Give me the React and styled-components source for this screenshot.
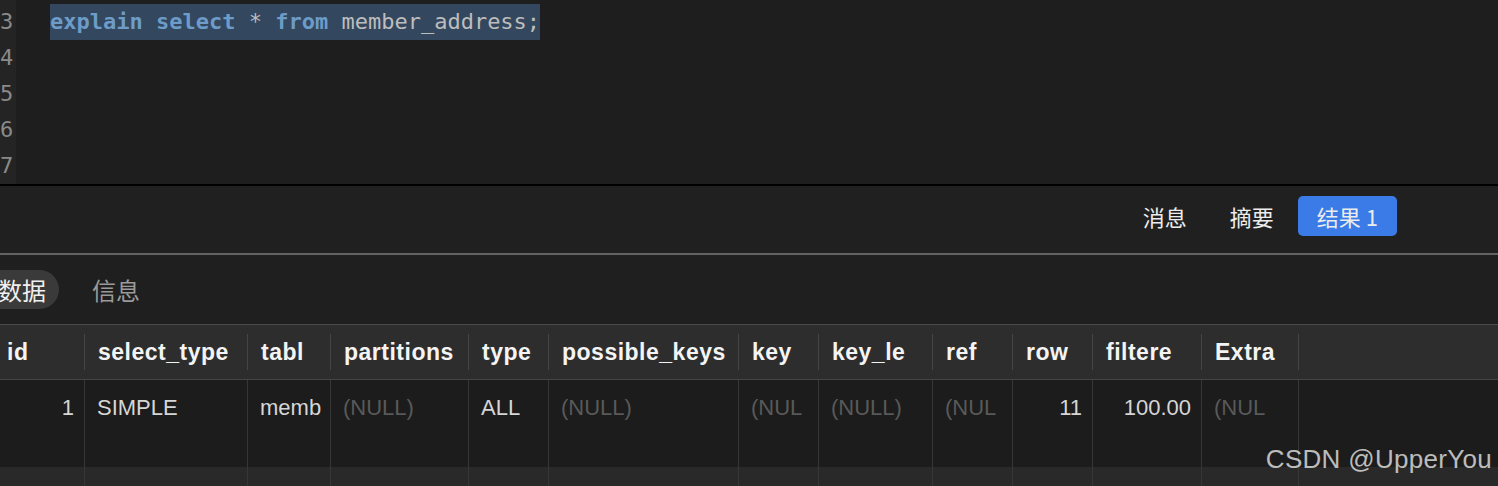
import styled, { createGlobalStyle } from "styled-components";

const GlobalStyle = createGlobalStyle`
  html, body {
    margin: 0;
    padding: 0;
    background: #1e1e1e;
  }
  #root {
    width: 1498px;
    height: 486px;
    overflow: hidden;
  }
`;

const Page = styled.div`
  position: relative;
  width: 1498px;
  height: 486px;
  overflow: hidden;
  display: flex;
  flex-direction: column;
  font-family: "Liberation Sans", "Noto Sans CJK SC", sans-serif;
`;

const Editor = styled.div`
  display: flex;
  height: 184px;
  background: #1e1e1e;
  border-bottom: 2px solid #000;
  flex-shrink: 0;
`;

const Gutter = styled.div`
  width: 16px;
  padding-top: 4px;
  background: #242424;
  overflow: hidden;
  flex-shrink: 0;
`;

const LineNo = styled.div`
  height: 36px;
  line-height: 36px;
  padding-right: 6px;
  text-align: right;
  font-family: "DejaVu Sans Mono", monospace;
  font-size: 22px;
  color: #8a8a8a;
  white-space: nowrap;
`;

const Code = styled.div`
  padding: 4px 0 0 34px;
`;

const CodeLine = styled.div`
  height: 36px;
  line-height: 36px;
  font-family: "DejaVu Sans Mono", monospace;
  font-size: 22px;
  color: #bdbdbd;
  white-space: pre;
`;

const Selected = styled.span`
  display: inline-block;
  background: #33475f;
`;

const Kw = styled.span`
  color: #6d9cc8;
  font-weight: bold;
`;

const TabBar = styled.div`
  display: flex;
  justify-content: flex-end;
  align-items: flex-start;
  gap: 5px;
  height: 69px;
  padding: 10px 101px 0 0;
  box-sizing: border-box;
  background: #202020;
  border-bottom: 2px solid #626262;
  flex-shrink: 0;
`;

const Tab = styled.div`
  height: 40px;
  line-height: 40px;
  padding: 0 19px;
  border-radius: 5px;
  font-family: "Noto Sans CJK SC", sans-serif;
  font-size: 22px;
  color: #ececec;
  background: ${(p) => (p.$active ? "#3a7be8" : "transparent")};
`;

const SubBar = styled.div`
  display: flex;
  align-items: center;
  gap: 15px;
  height: 69px;
  background: #1f1f1f;
  border-bottom: 1px solid #4a4a4a;
  flex-shrink: 0;
`;

const Pill = styled.div`
  height: 39px;
  line-height: 39px;
  padding: 0 13px 0 18px;
  border-radius: 0 20px 20px 0;
  font-family: "Noto Sans CJK SC", sans-serif;
  font-size: 24px;
  color: ${(p) => (p.$active ? "#f0f0f0" : "#9a9a9a")};
  background: ${(p) => (p.$active ? "#3a3a3a" : "transparent")};
  margin-left: ${(p) => (p.$first ? "-20px" : "0")};
`;

const Table = styled.div`
  display: flex;
  flex-direction: column;
  flex: 1;
  background: #1c1c1c;
`;

const Row = styled.div`
  display: grid;
  grid-template-columns: ${(p) => p.$cols} 1fr;
  height: ${(p) => p.$h}px;
  background: ${(p) => p.$bg};
  border-bottom: ${(p) => (p.$head ? "1px solid #444" : "none")};
  flex-shrink: 0;
`;

const HeadCell = styled.div`
  position: relative;
  display: flex;
  align-items: center;
  padding-left: ${(p) => (p.$first ? 7 : 13)}px;
  font-size: 23px;
  font-weight: bold;
  letter-spacing: 0.5px;
  color: #f4f4f4;
  white-space: nowrap;
  overflow: hidden;
  &::after {
    content: "";
    position: absolute;
    right: 0;
    top: 9px;
    bottom: 9px;
    width: 1px;
    background: ${(p) => (p.$filler ? "transparent" : "#454545")};
  }
`;

const Cell = styled.div`
  padding: 15px 10px 0 ${(p) => (p.$right ? 0 : 12)}px;
  font-size: 22px;
  line-height: 25px;
  text-align: ${(p) => (p.$right ? "right" : "left")};
  color: ${(p) => (p.$null ? "#595959" : "#d6d6d6")};
  border-right: ${(p) => (p.$filler ? "none" : "1px solid #363636")};
  white-space: nowrap;
  overflow: hidden;
`;

const Watermark = styled.div`
  position: absolute;
  right: 6px;
  top: 444px;
  font-size: 26px;
  line-height: 30px;
  letter-spacing: 0.3px;
  color: rgba(225, 225, 225, 0.82);
  white-space: nowrap;
`;

const columns = [
  { name: "id", w: 85 },
  { name: "select_type", w: 163 },
  { name: "tabl", w: 83 },
  { name: "partitions", w: 138 },
  { name: "type", w: 80 },
  { name: "possible_keys", w: 190 },
  { name: "key", w: 80 },
  { name: "key_le", w: 114 },
  { name: "ref", w: 80 },
  { name: "row", w: 80 },
  { name: "filtere", w: 109 },
  { name: "Extra", w: 97 },
];

// values as the grid shows them, already clipped to the column width
const row = [
  { v: "1", right: true },
  { v: "SIMPLE" },
  { v: "memb" },
  { v: "(NULL)", nul: true },
  { v: "ALL" },
  { v: "(NULL)", nul: true },
  { v: "(NUL", nul: true },
  { v: "(NULL)", nul: true },
  { v: "(NUL", nul: true },
  { v: "11", right: true },
  { v: "100.00", right: true },
  { v: "(NUL", nul: true },
];

const cols = columns.map((c) => c.w + "px").join(" ");

function App() {
  return (
    <>
      <GlobalStyle />
      <Page>
        <Editor>
          <Gutter>
            {[3, 4, 5, 6, 7].map((n) => (
              <LineNo key={n}>{n}</LineNo>
            ))}
          </Gutter>
          <Code>
            <CodeLine>
              <Selected>
                <Kw>explain</Kw> <Kw>select</Kw> * <Kw>from</Kw> member_address;
              </Selected>
            </CodeLine>
          </Code>
        </Editor>

        <TabBar>
          <Tab>消息</Tab>
          <Tab>摘要</Tab>
          <Tab $active>结果 1</Tab>
        </TabBar>

        <SubBar>
          <Pill $active $first>数据</Pill>
          <Pill>信息</Pill>
        </SubBar>

        <Table>
          <Row $cols={cols} $h={54} $bg="#2d2d2d" $head>
            {columns.map((c, i) => (
              <HeadCell key={c.name} $first={i === 0}>
                {c.name}
              </HeadCell>
            ))}
            <HeadCell $filler />
          </Row>
          <Row $cols={cols} $h={87} $bg="#1c1c1c">
            {row.map((c, i) => (
              <Cell key={i} $right={c.right} $null={c.nul}>
                {c.v}
              </Cell>
            ))}
            <Cell $filler />
          </Row>
          <Row $cols={cols} $h={40} $bg="#292929">
            {columns.map((c) => (
              <Cell key={c.name} />
            ))}
            <Cell $filler />
          </Row>
        </Table>

        <Watermark>CSDN @UpperYou</Watermark>
      </Page>
    </>
  );
}

export default App;
